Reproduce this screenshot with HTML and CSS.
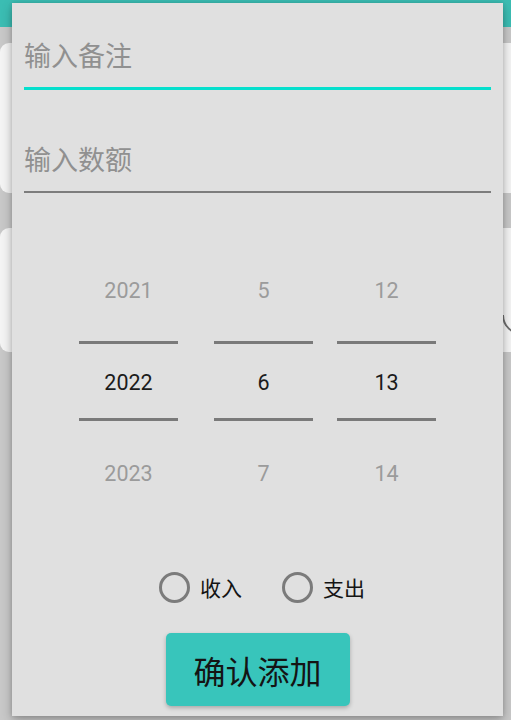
FILE: index.html
```html
<!DOCTYPE html>
<html lang="zh">
<head>
<meta charset="utf-8">
<title>添加记录</title>
<link rel="stylesheet" href="styles.css">
</head>
<body>
<div class="app">
  <header class="appbar"></header>
  <main class="list">
    <div class="card card-a"></div>
    <div class="card card-b"><span class="ring"></span></div>
  </main>
</div>

<div class="dialog">
  <div class="field">
    <div class="field-text">输入备注</div>
    <div class="field-line focused"></div>
  </div>
  <div class="field field-second">
    <div class="field-text">输入数额</div>
    <div class="field-line"></div>
  </div>

  <div class="picker">
    <div class="col">
      <div class="item item-top">2021</div>
      <div class="divider"></div>
      <div class="item item-mid">2022</div>
      <div class="divider"></div>
      <div class="item item-bot">2023</div>
    </div>
    <div class="col col-month">
      <div class="item item-top">5</div>
      <div class="divider"></div>
      <div class="item item-mid">6</div>
      <div class="divider"></div>
      <div class="item item-bot">7</div>
    </div>
    <div class="col">
      <div class="item item-top">12</div>
      <div class="divider"></div>
      <div class="item item-mid">13</div>
      <div class="divider"></div>
      <div class="item item-bot">14</div>
    </div>
  </div>

  <div class="radios">
    <label class="radio"><span class="radio-circle"></span><span class="radio-label">收入</span></label>
    <label class="radio radio-second"><span class="radio-circle"></span><span class="radio-label">支出</span></label>
  </div>

  <button class="confirm">确认添加</button>
</div>
</body>
</html>
```

FILE: styles.css
```css
html, body {
  margin: 0;
  padding: 0;
}
body {
  width: 511px;
  height: 720px;
  overflow: hidden;
  background: #c8c8c8;
  position: relative;
  font-family: "Noto Sans CJK SC", "Noto Sans", Roboto, sans-serif;
}

.app {
  display: flex;
  flex-direction: column;
}
.appbar {
  height: 27px;
  background: #3bbdb3;
}
.list {
  display: flex;
  flex-direction: column;
  padding-top: 16px;
}
.card {
  background: #f4f4f4;
  border-radius: 9px;
  margin-right: -10px;
}
.card-a {
  height: 150px;
}
.card-b {
  height: 124px;
  margin-top: 35px;
  display: flex;
  justify-content: flex-end;
  align-items: flex-start;
  overflow: hidden;
}
.ring {
  width: 40px;
  height: 40px;
  box-sizing: border-box;
  border: 2px solid transparent;
  border-left-color: #6e6e6e;
  border-radius: 50%;
  transform: rotate(-45deg);
  margin-top: 67px;
  margin-right: -21px;
}

/* dialog */
.dialog {
  position: absolute;
  top: 3px;
  left: 12px;
  width: 491px;
  height: 713px;
  box-sizing: border-box;
  background: #e0e0e0;
  padding: 0 12px;
  display: flex;
  flex-direction: column;
  box-shadow: 0 4px 10px rgba(0, 0, 0, 0.28), 0 0 4px rgba(0, 0, 0, 0.12);
}

.field {
  padding-top: 34px;
  display: flex;
  flex-direction: column;
}
.field-second {
  padding-top: 51px;
}
.field-text {
  font-size: 27px;
  line-height: 36px;
  height: 36px;
  color: #909090;
}
.field-line {
  margin-top: 14px;
  height: 2px;
  background: #7d7d7d;
}
.field-line.focused {
  height: 3px;
  background: #05dfcd;
}

.picker {
  margin-top: 51px;
  display: flex;
  padding-left: 55px;
  font-family: Roboto, "Noto Sans", sans-serif;
  font-size: 21.5px;
}
.col {
  width: 99px;
  display: flex;
  flex-direction: column;
  align-items: stretch;
  text-align: center;
}
.col-month {
  margin: 0 24px 0 36px;
}
.item {
  color: #9b9b9b;
  box-sizing: border-box;
}
.item-top {
  height: 92px;
  line-height: 92px;
  padding-top: 1px;
  margin-bottom: 5px;
}
.item-mid {
  height: 74px;
  line-height: 74px;
  padding-top: 2px;
  color: #1b1b1b;
}
.item-bot {
  height: 92px;
  line-height: 92px;
  padding-top: 1px;
  margin-top: 6px;
}
.divider {
  height: 3px;
  background: #7a7a7a;
}

.radios {
  margin-top: 48px;
  height: 40px;
  display: flex;
  align-items: center;
  padding-left: 135px;
}
.radio {
  display: flex;
  align-items: center;
}
.radio-second {
  margin-left: 40px;
}
.radio-circle {
  width: 31px;
  height: 31px;
  box-sizing: border-box;
  border: 3px solid #7b7b7b;
  border-radius: 50%;
}
.radio-label {
  margin-left: 10px;
  font-size: 21px;
  color: #141414;
}

.confirm {
  margin: 26px auto 0;
  width: 184px;
  height: 73px;
  border: none;
  border-radius: 5px;
  background: #38c5bb;
  color: #141414;
  font-family: "Noto Sans CJK SC", "Noto Sans", sans-serif;
  font-size: 32px;
  padding: 0;
  box-shadow: 0 2px 4px rgba(0, 0, 0, 0.25);
}
```
